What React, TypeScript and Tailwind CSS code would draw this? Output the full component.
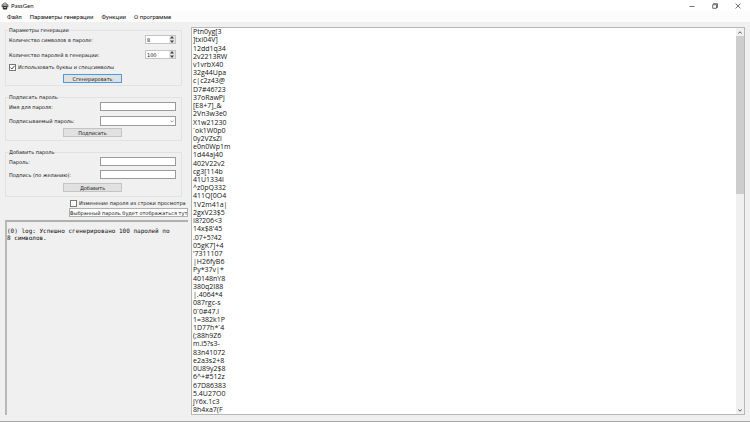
import { ReactNode } from "react";

const passwords = [
  "Ptn0yg[3", "]txi04V]", "12dd1q34", "2v2213RW", "v1vrbX40", "32g44Upa",
  "c|c2z43@", "D7#46?23", "37oRawPj", "[E8+7]_&", "2Vn3w3e0", "X1w21230",
  "`ok1W0p0", "0y2VZsZl", "e0n0Wp1m", "1d44aj40", "402V22v2", "cg3[114b",
  "41U1334l", "^z0pQ332", "411Q[0O4", "1V2m41a|", "2gxV23$5", "I8?206<3",
  "14x$8'45", ".07+5?42", "05gK7]+4", "'7311107", "|H26fyB6", "Py*37v|*",
  "40148nY8", "380q2I88", "|.4064*4", "087rgc-s", "0`0#47.l", "1=382k1P",
  "1D77h*`4", "(;88h9Z6", "m.i5?s3-", "83n41072", "e2a3s2+8", "0U89y2$8",
  "6^+#512z", "67D86383", "5.4U27O0", "jY6x.1c3", "8h4xa7(F",
];

const menu = ["Файл", "Параметры генерации", "Функции", "О программе"];

export default function App() {
  return (
    <div className="flex h-screen flex-col overflow-hidden border-b border-[#a8a8a8] bg-[#f0f0f0] font-['DejaVu_Sans',sans-serif] text-[5px] leading-[8px] text-[#111]">
      <TitleBar />
      <MenuBar />
      <main className="flex min-h-0 flex-1 gap-[3px] px-[5px] pt-[5px] pb-[6px]">
        <aside className="-mt-px flex w-[183px] shrink-0 flex-col">
          <Group title="Параметры генерации" className="h-[60px]">
            <SpinRow id="length" label="Количество символов в пароле:" value="8" />
            <div className="h-[6px]" />
            <SpinRow id="count" label="Количество паролей в генерации:" value="100" />
            <label className="mt-[4px] flex h-[8px] items-center gap-[2px]">
              <Check defaultChecked />
              Использовать буквы и спецсимволы
            </label>
            <PushButton primary className="mt-[3px]">Сгенерировать</PushButton>
          </Group>

          <Group title="Подписать пароль" className="mt-[7px] h-[48px]">
            <FieldRow id="name" label="Имя для пароля:">
              <input id="name" className="h-[9px] w-[76px] border border-[#9a9a9a] bg-white px-[2px]" />
            </FieldRow>
            <div className="h-[5px]" />
            <FieldRow id="target" label="Подписываемый пароль:">
              <div className="relative flex h-[10px] w-[76px]">
                <select id="target" className="w-full appearance-none border border-[#9a9a9a] bg-white" />
                <svg viewBox="0 0 4 3" className="pointer-events-none absolute top-[4px] right-[2px] w-[4px] fill-none stroke-[#777]" strokeWidth=".7">
                  <path d="M.4.5 2 2.1 3.6.5" />
                </svg>
              </div>
            </FieldRow>
            <PushButton className="mt-[3px]">Подписать</PushButton>
          </Group>

          <Group title="Добавить пароль" className="mt-[7px] h-[49px]">
            <FieldRow id="password" label="Пароль:">
              <input id="password" className="h-[9px] w-[76px] border border-[#9a9a9a] bg-white px-[2px]" />
            </FieldRow>
            <div className="h-[4px]" />
            <FieldRow id="caption" label="Подпись (по желанию):">
              <input id="caption" className="h-[9px] w-[76px] border border-[#9a9a9a] bg-white px-[2px]" />
            </FieldRow>
            <PushButton className="mt-[4px]">Добавить</PushButton>
          </Group>

          <label className="mt-[1px] ml-[65px] flex h-[10px] items-center gap-[2px] whitespace-nowrap">
            <Check />
            Изменение пароля из строки просмотра
          </label>
          <input
            aria-label="Выбранный пароль"
            readOnly
            value="Выбранный пароль будет отображаться тут"
            className="ml-[64px] h-[9px] border border-[#b0b0b0] bg-white"
          />
          <textarea
            aria-label="Журнал"
            readOnly
            value="(0) log: Успешно сгенерировано 100 паролей по 8 символов."
            className="mt-[3px] min-h-0 flex-1 resize-none overflow-hidden border-t-2 border-l-2 border-t-[#b0b0b0] border-l-[#b8b8b8] pt-[5px] pr-[16px] font-['DejaVu_Sans_Mono',monospace] text-[6px] leading-[7px] text-[#111]"
          />
        </aside>
        <PasswordList />
      </main>
    </div>
  );
}

function TitleBar() {
  return (
    <header className="flex h-[11px] shrink-0 items-center bg-white font-['Lato',sans-serif] text-[6px]">
      <svg viewBox="0 0 9 9" className="ml-px size-[8px]">
        <path d="M2 3.5C2 .4 7 .4 7 3.5" fill="none" stroke="#555" strokeWidth="1" />
        <rect x=".6" y="2.6" width="7.8" height="3.4" rx="1" fill="#777" />
        <rect x="2" y="4.2" width="5" height="4.3" rx=".8" fill="#333" />
        <path d="M3 3.7h3M3.2 6.2h2.6" stroke="#eee" strokeWidth=".8" />
      </svg>
      <h1 className="ml-[2px] flex-1">PassGen</h1>
      <div className="flex items-center gap-[17px] pr-[9px]">
        <CaptionButton label="Свернуть" d="M.5 3.5h5" />
        <CaptionButton label="Восстановить" d="M1.5 1.5V.7h4v3.8h-.8M.7 1.7h3.8v3.6H.7z" />
        <CaptionButton label="Закрыть" d="M.6.6l4.8 4.8M5.4.6.6 5.4" />
      </div>
    </header>
  );
}

function CaptionButton({ label, d }: { label: string; d: string }) {
  return (
    <button aria-label={label}>
      <svg viewBox="0 0 6 6" className="size-[6px] fill-none stroke-[#333]" strokeWidth=".7">
        <path d={d} />
      </svg>
    </button>
  );
}

function MenuBar() {
  return (
    <nav className="flex h-[11px] shrink-0 items-center gap-[8px] bg-[#fcfcfc] pl-[7px] font-['Roboto',sans-serif] text-[6px]">
      {menu.map((item) => (
        <button key={item}>{item}</button>
      ))}
    </nav>
  );
}

function Group({ title, className, children }: { title: string; className: string; children: ReactNode }) {
  return (
    <fieldset className={`mr-[6px] flex shrink-0 flex-col border border-[#e2e2e2] pt-px pr-[4px] pl-[3px] ${className}`}>
      <legend className="leading-[8px]">{title}</legend>
      {children}
    </fieldset>
  );
}

function SpinRow({ id, label, value }: { id: string; label: string; value: string }) {
  return (
    <div className="flex h-[9px] items-center justify-between">
      <label htmlFor={id}>{label}</label>
      <div className="mr-px flex h-[9px] w-[31px] border border-[#c4c4c4] bg-white">
        <input id={id} defaultValue={value} className="w-0 flex-1 pl-px" />
        <div className="flex w-[6px] flex-col bg-[#e4e4e4]">
          <button aria-label="Больше" className="flex flex-1 items-center justify-center">
            <svg viewBox="0 0 4 3" className="w-[4px] fill-[#444]"><path d="M2 0 4 2.5H0z" /></svg>
          </button>
          <button aria-label="Меньше" className="flex flex-1 items-center justify-center">
            <svg viewBox="0 0 4 3" className="w-[4px] fill-[#444]"><path d="M2 3 0 .5h4z" /></svg>
          </button>
        </div>
      </div>
    </div>
  );
}

function FieldRow({ id, label, children }: { id: string; label: string; children: ReactNode }) {
  return (
    <div className="mr-px flex h-[9px] items-center justify-between">
      <label htmlFor={id}>{label}</label>
      {children}
    </div>
  );
}

function Check({ defaultChecked }: { defaultChecked?: boolean }) {
  return (
    <span className="relative flex size-[7px] shrink-0">
      <input
        type="checkbox"
        defaultChecked={defaultChecked}
        className="peer size-full appearance-none border border-[#777] bg-white"
      />
      <svg viewBox="0 0 7 7" className="pointer-events-none absolute inset-0 hidden fill-none stroke-[#222] peer-checked:block" strokeWidth=".8">
        <path d="M1.6 3.6 2.9 5l2.7-3.2" />
      </svg>
    </span>
  );
}

function PushButton({ primary, className, children }: { primary?: boolean; className: string; children: ReactNode }) {
  return (
    <button
      className={`ml-[54px] flex h-[9px] w-[59px] shrink-0 items-center justify-center bg-[#e1e1e1] ${
        primary ? "border border-[#4a9ae0]" : "border border-[#c4c4c4]"
      } ${className}`}
    >
      {children}
    </button>
  );
}

function PasswordList() {
  return (
    <section className="flex min-w-0 flex-1 border border-[#b8b8b8] bg-white font-['Open_Sans',sans-serif] text-[7px]">
      <ul className="flex flex-1 flex-col pl-px">
        {passwords.map((p) => (
          <li key={p} className="flex min-h-0 flex-1 items-center">{p}</li>
        ))}
      </ul>
      <div className="flex w-[8px] flex-col bg-[#f0f0f0]">
        <button aria-label="Вверх" className="flex h-[8px] items-center justify-center">
          <svg viewBox="0 0 4 3" className="w-[4px] fill-none stroke-[#555]"><path d="M.3 2.4 2 .8l1.7 1.6" /></svg>
        </button>
        <div className="h-[158px] bg-[#cdcdcd]" />
        <button aria-label="Вниз" className="mt-auto flex h-[8px] items-center justify-center">
          <svg viewBox="0 0 4 3" className="w-[4px] fill-none stroke-[#555]"><path d="M.3.6 2 2.2 3.7.6" /></svg>
        </button>
      </div>
    </section>
  );
}
